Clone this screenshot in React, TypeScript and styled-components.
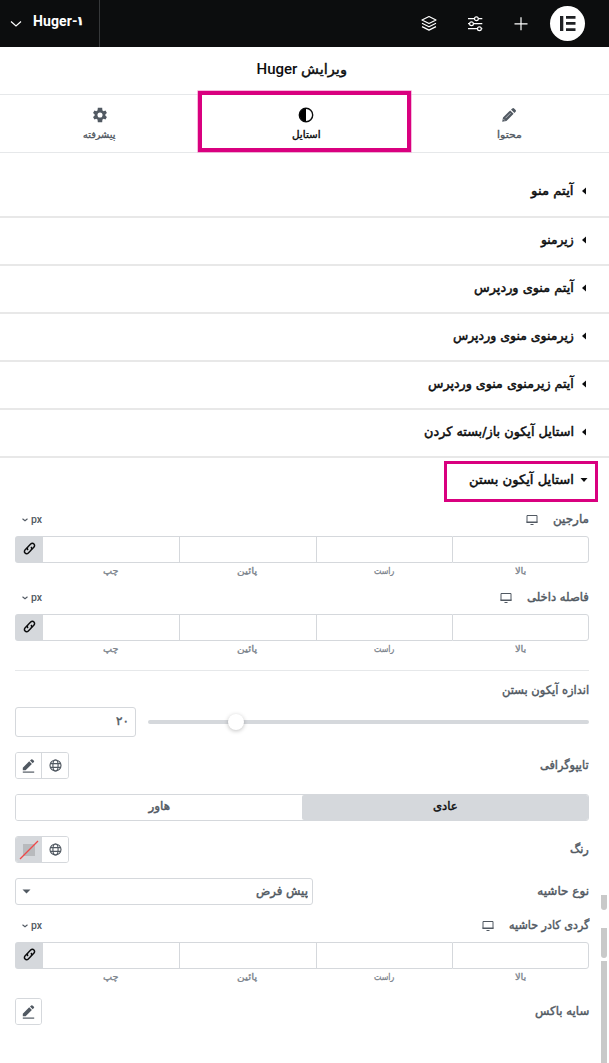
import React, { useLayoutEffect, useRef, useState } from "react";
import styled, { createGlobalStyle } from "styled-components";

const Global = createGlobalStyle`
  * { box-sizing: border-box; }
  body { margin: 0; background: #fff; font-family: Roboto, "DejaVu Sans", sans-serif; color: #515962; overflow: hidden; }
  svg { display: block; flex: none; }
`;

const Page = styled.div`
  position: relative;
  width: 609px;
  height: 1063px;
  overflow: hidden;
  direction: rtl;
`;

/* Persian text, condensed to the column width it is given */
const WordBox = styled.span<{ $w: number; $lh: number }>`
  display: flex;
  flex: none;
  justify-content: flex-start;
  width: ${(p) => p.$w}px;
  height: ${(p) => p.$lh}px;
  line-height: ${(p) => p.$lh}px;
`;
const WordInk = styled.span<{ $size: number; $stroke: number }>`
  flex: none;
  white-space: nowrap;
  transform-origin: right center;
  font-family: "DejaVu Sans", sans-serif;
  font-size: ${(p) => p.$size}px;
  -webkit-text-stroke: ${(p) => p.$stroke}px currentColor;
`;
function Word({ children, w, size = 12, stroke = 0.45, lh = 18 }: { children: string; w: number; size?: number; stroke?: number; lh?: number }) {
  const ref = useRef<HTMLSpanElement>(null);
  const [k, setK] = useState(1);
  useLayoutEffect(() => {
    if (ref.current) setK(w / ref.current.offsetWidth);
  }, [w, children]);
  return (
    <WordBox $w={w} $lh={lh}>
      <WordInk ref={ref} $size={size} $stroke={stroke} style={{ transform: `scaleX(${k})` }}>
        {children}
      </WordInk>
    </WordBox>
  );
}

const TopBar = styled.header`
  display: flex;
  align-items: center;
  direction: ltr;
  height: 47px;
  background: #0c0d0e;
  color: #fff;
`;
const SiteMenu = styled.div`
  display: flex;
  align-items: center;
  gap: 11px;
  width: 100px;
  height: 47px;
  padding: 0 0 2px 10px;
  border-right: 1px solid #36383a;
  font-size: 14px;
  font-weight: 700;
  white-space: nowrap;
  svg { margin-top: 3px; }
`;
const SiteName = styled.span`
  display: flex;
  align-items: center;
  letter-spacing: 0.1px;
  margin-top: -3px;
  direction: ltr;
`;
const SiteNumber = styled.span`
  margin-left: -2px;
`;
const Tools = styled.div`
  display: flex;
  align-items: center;
  gap: 28px;
  margin-left: auto;
  padding-right: 24px;
`;
const Logo = styled.div`
  display: grid;
  place-items: center;
  width: 35px;
  height: 35px;
  margin-left: -8px;
  border-radius: 50%;
  background: #fff;
`;

const Title = styled.h1`
  display: flex;
  align-items: center;
  justify-content: center;
  gap: 4px;
  height: 48px;
  margin: 0;
  padding: 0 5px 3px 0;
  border-bottom: 1px solid #e6e8ea;
  color: #0c0d0e;
  font-size: 15px;
  font-weight: 500;
`;

const Tabs = styled.nav`
  display: grid;
  grid-template-columns: 200px 207px 202px;
  height: 58px;
  border-bottom: 1px solid #e6e8ea;
`;
const Tab = styled.div<{ $active?: boolean; $shift?: number }>`
  position: relative;
  display: flex;
  flex-direction: column;
  align-items: center;
  gap: 3px;
  padding-top: 12px;
  padding-left: ${(p) => Math.max(0, (p.$shift ?? 0) * 2)}px;
  padding-right: ${(p) => Math.max(0, -(p.$shift ?? 0) * 2)}px;
  color: ${(p) => (p.$active ? "#0c0d0e" : "#515962")};
`;
const TabMark = styled.div`
  position: absolute;
  top: -4px;
  left: -4px;
  width: 213px;
  height: 61px;
  border: 4px solid #d9007f;
  box-shadow: 0 0 0 0.6px #f08cc6;
`;

const Sections = styled.div`
  padding-top: 17px;
`;
const Section = styled.div<{ $open?: boolean }>`
  position: relative;
  display: flex;
  align-items: center;
  gap: 5px;
  height: ${(p) => (p.$open ? 44 : 48)}px;
  padding: 0 20px ${(p) => (p.$open ? 0 : 2)}px 0;
  border-bottom: ${(p) => (p.$open ? 0 : 2)}px solid #e8e8e8;
  color: #0c0d0e;
  &:first-child { padding-bottom: 4px; }
`;
const Caret = styled.span`
  display: grid;
  place-items: center;
  width: 10px;
`;
const SectionMark = styled.div`
  position: absolute;
  top: 3px;
  left: 444px;
  width: 154px;
  height: 41px;
  border: 3px solid #d9007f;
`;

const Controls = styled.div`
  padding: 9px 20px 0 15px;
`;
const LabelRow = styled.div`
  display: flex;
  align-items: center;
  height: 18px;
  > :first-child { margin-top: -2px; }
`;
const Device = styled.span`
  margin-right: 15px;
`;
const Unit = styled.span`
  display: flex;
  align-items: center;
  gap: 3px;
  margin-right: auto;
  padding-left: 7px;
  font-size: 10.5px;
  font-weight: 500;
  line-height: 18px;
`;
const Dimensions = styled.div<{ $after: number }>`
  display: grid;
  grid-template-columns: 137px 136px 137px 136px 28px;
  margin: 7px 0 ${(p) => p.$after}px;
`;
const Cell = styled.div`
  height: 27px;
  border: 1px solid #d5d8dc;
  border-right-width: 0;
  &:first-child { border-right-width: 1px; border-radius: 0 3px 3px 0; }
  &:nth-child(4) { border-left: 0; }
`;
const LinkButton = styled.div`
  display: grid;
  place-items: center;
  height: 27px;
  padding-bottom: 2px;
  border-radius: 3px 0 0 3px;
  background: #d5d8dc;
`;
const Side = styled.div`
  display: flex;
  justify-content: center;
  height: 16px;
  color: #7b838c;
`;
const Rule = styled.hr`
  height: 1px;
  margin: 0 0 11px;
  border: 0;
  background: #e6e8ea;
`;
const SliderRow = styled.div`
  display: flex;
  align-items: center;
  gap: 12px;
  height: 30px;
  margin: 7px 0 15px;
`;
const Track = styled.div`
  display: flex;
  align-items: center;
  flex: 1;
  height: 4px;
  padding-left: 80px;
  justify-content: flex-end;
  border-radius: 3px;
  background: #d5d8dc;
`;
const Knob = styled.div`
  width: 16px;
  height: 16px;
  border-radius: 50%;
  background: #fff;
  box-shadow: 0 1px 4px rgba(0, 0, 0, 0.25);
`;
const NumberField = styled.div`
  display: flex;
  align-items: center;
  width: 121px;
  height: 30px;
  padding: 0 6px 2px 0;
  border: 1px solid #d5d8dc;
  border-radius: 3px;
`;
const Row = styled.div<{ $after?: number }>`
  display: flex;
  align-items: center;
  justify-content: space-between;
  height: 27px;
  margin-bottom: ${(p) => p.$after ?? 15}px;
  > :first-child { margin-top: -2px; }
`;
const ButtonGroup = styled.div`
  display: flex;
  direction: ltr;
  height: 27px;
  border: 1px solid #d5d8dc;
  border-radius: 3px;
  overflow: hidden;
`;
const SquareButton = styled.div<{ $filled?: boolean }>`
  display: grid;
  place-items: center;
  width: 25px;
  background: ${(p) => (p.$filled ? "#d5d8dc" : "#fff")};
  & + & { width: 27px; border-left: 1px solid #d5d8dc; }
`;
const Toggle = styled.div`
  display: grid;
  grid-template-columns: 286px 1fr;
  height: 27px;
  margin-bottom: 15px;
  border: 1px solid #d5d8dc;
  border-radius: 3px;
`;
const Choice = styled.div<{ $active?: boolean }>`
  display: flex;
  justify-content: center;
  padding-top: 2px;
  border-radius: 2px;
  background: ${(p) => (p.$active ? "#d5d8dc" : "#fff")};
  color: ${(p) => (p.$active ? "#0c0d0e" : "#515962")};
`;
const Select = styled.div`
  display: flex;
  align-items: center;
  justify-content: space-between;
  width: 298px;
  height: 27px;
  padding: 0 4px 0 6px;
  border: 1px solid #d5d8dc;
  border-radius: 3px;
  > :first-child { margin-top: -2px; }
`;
const ScrollTrack = styled.div`
  position: absolute;
  top: 895px;
  left: 601px;
  width: 6px;
  height: 168px;
`;
const Thumb = styled.div<{ $h: number; $gap: number; $round?: boolean }>`
  height: ${(p) => p.$h}px;
  margin-bottom: ${(p) => p.$gap}px;
  border-radius: ${(p) => (p.$round ? "0 0 3px 3px" : "0")};
  background: #c9c9c9;
`;

const Monitor = () => (
  <svg width="12" height="10" viewBox="0 0 12 10">
    <path d="M1 .5h10v7H1z" fill="none" stroke="#515962" />
    <path d="M.5 6.500h11V8H.5zM4.500 9h3v1h-3z" fill="#515962" />
  </svg>
);
const Pen = () => (
  <svg width="13" height="14" viewBox="0 0 13 14" fill="#515962">
    <path d="M.8 8.700 7.200 2.300 9.900 5 3.600 11.200H.8zM8 1.600 9.200.4q.6-.5 1.300 0l1.400 1.400q.5.600 0 1.200l-1.200 1.200z" />
    <path d="M.8 12.500h11.400v1.200H.8z" />
  </svg>
);
const Globe = () => (
  <svg width="13" height="13" viewBox="0 0 13 13" fill="none" stroke="#515962" strokeWidth="1.150">
    <circle cx="6.500" cy="6.500" r="5.500" />
    <ellipse cx="6.500" cy="6.500" rx="2.600" ry="5.500" />
    <path d="M1.300 4.600h10.400M1.300 8.400h10.400" />
  </svg>
);
const Chain = () => (
  <svg width="13" height="13" viewBox="1 1 22 22" fill="none" stroke="#0c0d0e" strokeWidth="2.500">
    <path d="M9.500 14.500c-2-2-1.500-4 0-5.500l4.500-4.500c1.700-1.700 4-1.700 5.500-.2s1.500 3.800-.2 5.500l-3.300 3.300" />
    <path d="M14.500 9.500c2 2 1.500 4 0 5.500L10 19.500c-1.700 1.700-4 1.700-5.500.2s-1.500-3.800.2-5.500L8 10.900" />
  </svg>
);

const closed: [string, number][] = [
  ["آیتم منو", 43],
  ["زیرمنو", 33],
  ["آیتم منوی وردپرس", 100],
  ["زیرمنوی منوی وردپرس", 121],
  ["آیتم زیرمنوی منوی وردپرس", 146],
  ["استایل آیکون باز/بسته کردن", 150],
];
const sides: [string, number][] = [["بالا", 11], ["راست", 20], ["پائین", 20], ["چپ", 15]];

function DimensionControl({ label, w, after }: { label: string; w: number; after: number }) {
  return (
    <>
      <LabelRow>
        <Word w={w}>{label}</Word>
        <Device><Monitor /></Device>
        <Unit>
          px
          <svg width="6" height="4" viewBox="0 0 6 4" fill="none" stroke="#515962" strokeWidth="1.100"><path d="m.5.7 2.500 2 2.500-2" /></svg>
        </Unit>
      </LabelRow>
      <Dimensions $after={after}>
        {sides.map(([s]) => <Cell key={s} />)}
        <LinkButton><Chain /></LinkButton>
        {sides.map(([s, sw]) => (
          <Side key={s}><Word w={sw} size={9} stroke={0.3} lh={16}>{s}</Word></Side>
        ))}
      </Dimensions>
    </>
  );
}

export default function App() {
  return (
    <Page>
      <Global />
      <TopBar>
        <SiteMenu>
          <svg width="12" height="8" viewBox="0 0 12 8" fill="none" stroke="#fff" strokeWidth="1.200"><path d="m1 1.500 5 4.500 5-4.500" /></svg>
          <SiteName>Huger-<SiteNumber><Word w={6} size={12} stroke={0.7}>۱</Word></SiteNumber></SiteName>
        </SiteMenu>
        <Tools>
          <svg width="18" height="18" viewBox="0 0 18 18" fill="none" stroke="#fff" strokeWidth="1.200" strokeLinejoin="round">
            <path d="M9 1.500 2 5l7 3.500L16 5zM2 8.300l7 3.500 7-3.500M2 11.600l7 3.500 7-3.500" />
          </svg>
          <svg width="18" height="18" viewBox="0 0 18 18" fill="none" stroke="#fff" strokeWidth="1.200">
            <path d="M2 3.700h6.500M12.300 3.700h4M2 8.700h1.600M7.500 8.700h8.800M2 13.700h9.500M15.300 13.700h1" />
            <circle cx="10.400" cy="3.700" r="1.900" /><circle cx="5.500" cy="8.700" r="1.900" /><circle cx="13.400" cy="13.700" r="1.900" />
          </svg>
          <svg width="18" height="18" viewBox="0 0 18 18" stroke="#fff" strokeWidth="1.200"><path d="M9 2.300v13M2.500 8.800h13" /></svg>
          <Logo>
            <svg width="16" height="15" viewBox="0 0 16 15" fill="#1f2124"><path d="M0 0h3.300v15H0zM6 0h9.500v2.800H6zM6 6h9.500v2.800H6zM6 12.200h9.500V15H6z" /></svg>
          </Logo>
        </Tools>
      </TopBar>
      <Title>
        <Word w={46} size={14} stroke={0.4}>ویرایش</Word>
        <span>Huger</span>
      </Title>
      <Tabs>
        <Tab>
          <svg width="16" height="16" viewBox="0 0 16 16" fill="#515962">
            <path d="m1.200 14.800.8-4.200 7.200-7.200 3.400 3.400L5.400 14zM10 2.600l1.300-1.200q.9-.8 1.800 0l1.500 1.500q.8.900 0 1.800L13.400 6z" />
            <path d="m4.500 11.200 5-5" stroke="#fff" strokeWidth=".6" />
            <path d="m2.600 12.300 1.100 1.100" stroke="#fff" strokeWidth=".8" />
          </svg>
          <Word w={25} size={10} stroke={0.35}>محتوا</Word>
        </Tab>
        <Tab $active $shift={0.5}>
          <TabMark />
          <svg width="16" height="16" viewBox="0 0 16 16"><circle cx="8" cy="8" r="6.700" fill="none" stroke="#0c0d0e" strokeWidth="1.400" /><path d="M8 1.500a6.500 6.500 0 0 0 0 13z" /></svg>
          <Word w={29} size={10} stroke={0.4}>استایل</Word>
        </Tab>
        <Tab $shift={-1.5}>
          <svg width="16" height="16" viewBox="1 1 22 22" fill="#515962">
            <path d="M19.400 13a7.500 7.500 0 0 0 0-2l2.100-1.700-2-3.500-2.500 1a7 7 0 0 0-1.700-1L15 2H9l-.400 3.800a7 7 0 0 0-1.700 1l-2.500-1-2 3.500L4.600 11a7.500 7.500 0 0 0 0 2l-2.200 1.700 2 3.500 2.500-1q.8.600 1.700 1L9 22h6l.3-3.800q.9-.4 1.700-1l2.500 1 2-3.500zM12 15.500a3.500 3.500 0 1 1 0-7 3.500 3.500 0 0 1 0 7z" />
          </svg>
          <Word w={32} size={10} stroke={0.35}>پیشرفته</Word>
        </Tab>
      </Tabs>
      <Sections>
        {closed.map(([t, w]) => (
          <Section key={t}>
            <Caret><svg width="4" height="8" viewBox="0 0 4 8"><path d="M4 .5v7L0 4z" fill="#0c0d0e" /></svg></Caret>
            <Word w={w} size={13} stroke={0.5}>{t}</Word>
          </Section>
        ))}
        <Section $open>
          <SectionMark />
          <Caret><svg width="8" height="4" viewBox="0 0 8 4"><path d="M.5 0h7L4 4z" fill="#0c0d0e" /></svg></Caret>
          <Word w={105} size={13} stroke={0.5}>استایل آیکون بستن</Word>
        </Section>
      </Sections>
      <Controls>
        <DimensionControl label="مارجین" w={36} after={10} />
        <DimensionControl label="فاصله داخلی" w={62} after={13} />
        <Rule />
        <LabelRow><Word w={87}>اندازه آیکون بستن</Word></LabelRow>
        <SliderRow>
          <Track><Knob /></Track>
          <NumberField><Word w={13} size={12}>۲۰</Word></NumberField>
        </SliderRow>
        <Row>
          <Word w={49}>تایپوگرافی</Word>
          <ButtonGroup>
            <SquareButton><Pen /></SquareButton>
            <SquareButton><Globe /></SquareButton>
          </ButtonGroup>
        </Row>
        <Toggle>
          <Choice $active><Word w={25}>عادی</Word></Choice>
          <Choice><Word w={22}>هاور</Word></Choice>
        </Toggle>
        <Row>
          <Word w={19}>رنگ</Word>
          <ButtonGroup>
            <SquareButton $filled>
              <svg width="20" height="20" viewBox="0 0 20 20"><path d="M4 4h12v12H4z" fill="#b8babd" /><path d="M1 19 19 1" stroke="#f04848" strokeWidth="1.300" /></svg>
            </SquareButton>
            <SquareButton><Globe /></SquareButton>
          </ButtonGroup>
        </Row>
        <Row $after={12}>
          <Word w={52}>نوع حاشیه</Word>
          <Select>
            <Word w={52}>پیش فرض</Word>
            <svg width="9" height="5" viewBox="0 0 9 5"><path d="M.5.5h8l-4 4z" fill="#515962" /></svg>
          </Select>
        </Row>
        <DimensionControl label="گردی کادر حاشیه" w={80} after={13} />
        <Row>
          <Word w={54}>سایه باکس</Word>
          <ButtonGroup><SquareButton><Pen /></SquareButton></ButtonGroup>
        </Row>
      </Controls>
      <ScrollTrack>
        <Thumb $h={15} $gap={18} $round />
        <Thumb $h={30} $gap={3} $round />
        <Thumb $h={102} $gap={0} />
      </ScrollTrack>
    </Page>
  );
}
